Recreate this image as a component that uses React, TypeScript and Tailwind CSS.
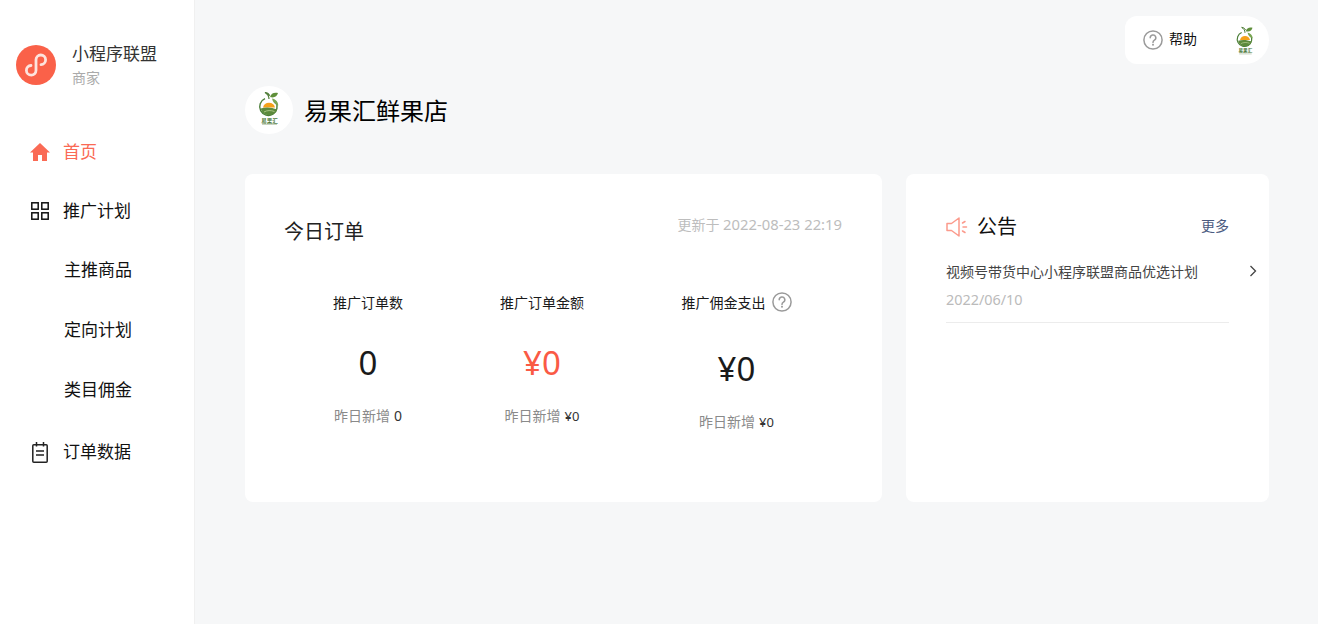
import React from "react";

const font = { fontFamily: '"Noto Sans", "Noto Sans CJK SC", sans-serif' };

function Logo({ size }: { size: number }) {
  return (
    <svg width={size} height={size} viewBox="0 0 48 48" aria-hidden="true">
      <path d="M24 13c0-3-1.500-5-4-6.500 2.500.2 4 1.300 4.700 3.300" fill="none" stroke="#4f7d38" strokeWidth="1.200" />
      <path d="M25 11c1-3.500 4-5 8-4-.8 3.500-4 5.300-8 4z" fill="#5f8f3a" />
      <path d="M20 12.700a8.700 8.700 0 1 0 10.500 3" fill="none" stroke="#4c7f39" strokeWidth="1.400" />
      <path d="M27 12.500c3.500.5 6 3.200 6.300 7-3.500-.8-5.600-3.300-6.300-7z" fill="#7aa653" />
      <path d="M18 21.500a6.200 6.200 0 0 1 12 0z" fill="#f4a11a" />
      <path d="M15.800 22.500c5-1.700 11-1.200 16.400 1-1.200 3.800-4.300 5.700-8 5.700-4.400 0-7.500-2.700-8.400-6.700z" fill="#5c8a3c" />
      <path d="M19 26c3-1.800 7-1.800 10.500-.5" fill="none" stroke="#a9c585" strokeWidth="1" />
      <text x="24.500" y="36.500" textAnchor="middle" fontSize="5.500" fill="#4d7a3a" fontWeight="700">易果汇</text>
      <rect x="17" y="37.800" width="15" height="1" fill="#bccab2" />
    </svg>
  );
}

function Question({ size }: { size: number }) {
  return (
    <svg width={size} height={size} viewBox="0 0 20 20" fill="none" aria-hidden="true">
      <circle cx="10" cy="10" r="9.100" stroke="#9a9a9a" strokeWidth="1.500" />
      <path d="M7.200 7.800a2.800 2.800 0 1 1 4.200 2.400c-1 .6-1.400 1.100-1.400 2.200" stroke="#9a9a9a" strokeWidth="1.500" strokeLinecap="round" />
      <circle cx="10" cy="14.800" r="1" fill="#9a9a9a" />
    </svg>
  );
}

function NavItem({ icon, label, active, height }: { icon?: React.ReactNode; label: string; active?: boolean; height: string }) {
  return (
    <div className={`flex items-center text-[17px] ${height} ${active ? "text-[#fa6a55]" : "text-[#111]"} ${icon ? "pl-[30px]" : "pl-[64px]"}`}>
      {icon && <span className="mr-[13px] flex w-[20px] justify-center">{icon}</span>}
      {label}
    </div>
  );
}

function Stat({ label, value, delta, red, help, deltaBig }: { label: string; value: string; delta: string; red?: boolean; help?: boolean; deltaBig?: boolean }) {
  return (
    <div className="flex flex-col items-center">
      <div className="flex h-[22px] items-center text-[14px] text-[#1a1a1a]">
        {label}
        {help && <span className="ml-[6px] flex"><Question size={20} /></span>}
      </div>
      <div className={`text-[33px] leading-[44px] ${help ? "mt-[34px]" : "mt-[28px]"} ${red ? "text-[#fa5a45]" : "text-[#1a1a1a]"}`}>{value}</div>
      <div className="mt-[21px] flex items-center text-[14px] leading-[20px] text-[#8a8a8a]">
        昨日新增<span className={`ml-[4px] text-[#333] ${deltaBig ? "text-[14px]" : "text-[13px]"}`}>{delta}</span>
      </div>
    </div>
  );
}

export default function App() {
  return (
    <div style={font} className="flex h-[624px] w-[1318px] overflow-hidden bg-[#f6f7f8]">
      <aside className="w-[195px] shrink-0 border-r border-[#f0f0f0] bg-white">
        <div className="flex items-start pl-[16px] pt-[45px]">
          <svg width="40" height="40" viewBox="0 0 40 40" aria-hidden="true">
            <circle cx="20" cy="20" r="20" fill="#fa6149" />
            <path d="M15 20.500a4.800 4.800 0 1 0 5 4.800V14.800a4.800 4.800 0 1 1 5 4.800" fill="none" stroke="#fde3dd" strokeWidth="2.800" strokeLinecap="round" />
          </svg>
          <div className="-mt-[1px] ml-[16px]">
            <div className="text-[17px] leading-[20px] text-[#333]">小程序联盟</div>
            <div className="mt-[5px] text-[14px] leading-[18px] text-[#aaa]">商家</div>
          </div>
        </div>
        <nav className="mt-[35px]">
          <NavItem
            active
            height="h-[60px]"
            label="首页"
            icon={
              <svg width="20" height="18" viewBox="0 0 20 18" aria-hidden="true">
                <path d="M10 0 0 9.500h3V18h5v-6h4v6h5V9.500h3z" fill="#fa6a55" />
              </svg>
            }
          />
          <NavItem
            height="h-[58px]"
            label="推广计划"
            icon={
              <svg width="18" height="18" viewBox="0 0 18 18" fill="none" stroke="#111" strokeWidth="1.500" aria-hidden="true">
                <rect x=".8" y=".8" width="6.400" height="6.400" />
                <rect x="10.800" y=".8" width="6.400" height="6.400" />
                <rect x=".8" y="10.800" width="6.400" height="6.400" />
                <rect x="10.800" y="10.800" width="6.400" height="6.400" />
              </svg>
            }
          />
          <NavItem height="h-[60px]" label="主推商品" />
          <NavItem height="h-[60px]" label="定向计划" />
          <NavItem height="h-[60px]" label="类目佣金" />
          <NavItem
            height="h-[64px]"
            label="订单数据"
            icon={
              <svg width="16" height="21" viewBox="0 0 16 21" fill="none" stroke="#222" strokeWidth="1.500" aria-hidden="true">
                <rect x=".8" y="2.800" width="14.400" height="17.400" rx="1" />
                <path d="M4.500 0v4.500M11.500 0v4.500M4 9h8M4 13h8" />
              </svg>
            }
          />
        </nav>
      </aside>

      <main className="min-w-0 flex-1 pl-[50px] pr-[49px] pt-[16px]">
        <div className="flex justify-end">
          <div className="flex h-[48px] w-[144px] items-center rounded-l-[12px] rounded-r-[24px] bg-white pl-[18px]">
            <Question size={20} />
            <span className="mb-[4px] ml-[6px] text-[14px] text-[#111]">帮助</span>
            <span className="ml-[28px] mt-[4px] flex"><Logo size={40} /></span>
          </div>
        </div>

        <div className="mt-[22px] flex items-center">
          <div className="flex h-[48px] w-[48px] items-center justify-center rounded-full bg-white">
            <Logo size={48} />
          </div>
          <h1 className="ml-[11px] pt-[1px] text-[24px] font-normal text-[#000]">易果汇鲜果店</h1>
        </div>

        <div className="mt-[40px] flex gap-[24px]">
          <section className="h-[328px] w-[637px] rounded-[8px] bg-white pl-[39px] pr-[40px] pt-[44px]">
            <div className="flex items-start justify-between">
              <h2 className="text-[20px] font-normal leading-[28px] text-[#222]">今日订单</h2>
              <span className="-mt-[3px] text-[14px] leading-[18px] text-[#bdbdbd]">更新于 <span className="text-[14.800px]">2022-08-23 22:19</span></span>
            </div>
            <div className="mt-[45px] grid grid-cols-[168px_180px_209px]">
              <Stat label="推广订单数" value="0" delta="0" deltaBig />
              <Stat label="推广订单金额" value="¥0" delta="¥0" red />
              <Stat label="推广佣金支出" value="¥0" delta="¥0" help />
            </div>
          </section>

          <section className="h-[328px] w-[363px] rounded-[8px] bg-white pl-[40px] pr-[40px] pt-[38px]">
            <div className="flex items-center justify-between">
              <div className="flex items-center">
                <svg width="23" height="20" viewBox="0 0 23 20" fill="none" stroke="#fb9a8c" strokeWidth="1.500" aria-hidden="true">
                  <path d="M1 6.500h4.500L13 1v18l-7.500-5.500H1z" strokeLinejoin="round" />
                  <path d="M16.500 6 19 4.500M17 10h3.500M16.500 14l2.500 1.500" strokeLinecap="round" />
                </svg>
                <span className="ml-[8px] pt-[1px] text-[20px] leading-[28px] text-[#111]">公告</span>
              </div>
              <span className="mb-[3px] text-[14px] text-[#4a5a80]">更多</span>
            </div>
            <div className="relative mt-[21px] border-b border-[#ececec] pb-[12px]">
              <div className="text-[14px] leading-[20px] text-[#444]">视频号带货中心小程序联盟商品优选计划</div>
              <div className="mt-[8px] text-[14.400px] leading-[20px] text-[#bbb]">2022/06/10</div>
              <svg className="absolute right-[-28px] top-[3px]" width="8" height="12" viewBox="0 0 8 12" fill="none" stroke="#444" strokeWidth="1.300" aria-hidden="true">
                <path d="m1.500 1 5 5-5 5" />
              </svg>
            </div>
          </section>
        </div>
      </main>
    </div>
  );
}
